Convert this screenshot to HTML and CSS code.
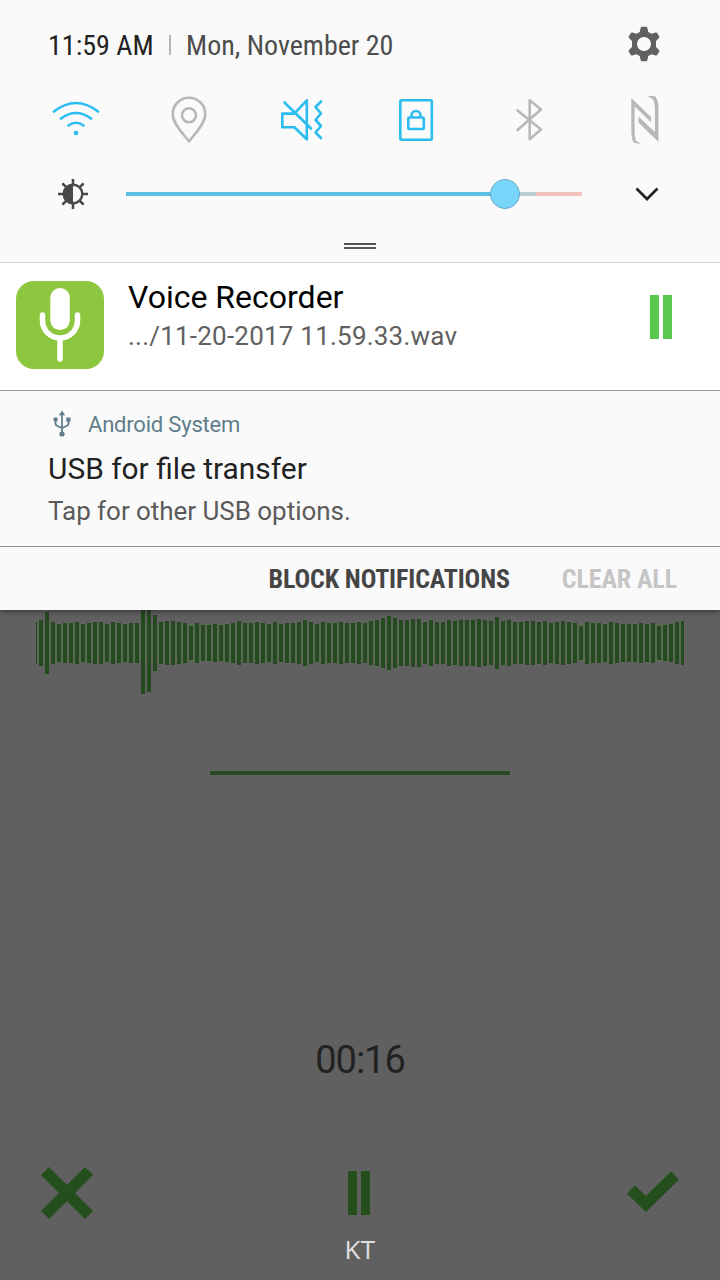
FILE: index.html
```html
<!DOCTYPE html>
<html lang="en">
<head>
<meta charset="UTF-8">
<meta name="viewport" content="width=device-width, initial-scale=1.0">
<title>Voice Recorder</title>
<link rel="stylesheet" href="styles.css">
</head>
<body>
<div id="panel">
	<div class="top">
		<span class="clock">11:59 AM</span>
		<span class="sep"></span>
		<span class="date">Mon, November 20</span>
		<svg class="gear" width="34" height="36" viewBox="0 0 34 36">
			<path fill="#606060" fill-rule="evenodd" d="M15 .8h4q1 0 1.300 1l1 4.200 3.200 1.800 4.200-1.300q1-.3 1.500.6l2 3.400q.5.900-.2 1.600l-3 2.900v6l3 2.900q.7.700.2 1.600l-2 3.400q-.5.900-1.500.6l-4.200-1.300-3.200 1.800-1 4.200q-.3 1-1.300 1h-4q-1 0-1.300-1l-1-4.200-3.200-1.800-4.200 1.300q-1 .3-1.500-.6l-2-3.400q-.5-.9.200-1.600l3-2.900v-6l-3-2.900q-.7-.7-.2-1.600l2-3.400q.5-.9 1.500-.6l4.200 1.300 3.200-1.800 1-4.200q.3-1 1.300-1zM17 11a7 7 0 1 0 0 14 7 7 0 0 0 0-14z"/>
		</svg>
	</div>

	<div class="toggles">
		<svg class="on" width="48" height="48" viewBox="52 96 48 48">
			<path d="M54 111.500q22-17 44 0M61 118.500q15-11 30 0M68.500 125.500q7.500-5.500 15 0"/>
			<circle class="dot" cx="76" cy="133" r="2.300"/>
		</svg>
		<svg width="48" height="48" viewBox="166 96 48 48">
			<path d="M189 141.500c-4-6-16.300-17-16.300-27.500a16.300 16.300 0 0 1 32.600 0c0 10.500-12.300 21.500-16.300 27.500z"/>
			<circle cx="189" cy="115.300" r="7"/>
		</svg>
		<svg class="on" width="48" height="48" viewBox="279.500 96 48 48">
			<path d="M307.300 100.300v39l-12.500-12.100h-12v-13.600h12zM285 102.500l26.500 26M321.500 101.500l-5.500 5.500 5.500 6.500-5.500 6.500 5.500 6-5.500 6.500 5.500 5.500"/>
		</svg>
		<svg class="on" width="48" height="48" viewBox="393 96 48 48">
			<rect x="400.300" y="100.200" width="31.500" height="39.500" rx="1"/>
			<rect x="408.300" y="117.500" width="15.500" height="11.500" rx="1"/>
			<path d="M411.500 117v-1.500a4.500 4.500 0 0 1 9 0v1.500"/>
		</svg>
		<svg width="48" height="48" viewBox="506.500 96 48 48">
			<path d="M518 110.500l23.500 19-11.300 9.700v-39l11.300 9.300-23.500 20.500"/>
		</svg>
		<svg width="48" height="48" viewBox="620 96 48 48">
			<path class="nfc" d="M631.300 98l19.800 19v5.200L634.600 106.500V129q0 8 1.500 12l4.900 2.500q-6 0-7.700-1.500-2-3-2-13zM658.500 142l-20-19.500v-6l16.400 15.600V110q0-9-2.700-11.300l-4.700-2.600h6q5 .4 5 13.900z"/>
		</svg>
	</div>

	<div class="brightness">
		<svg class="sun" width="32" height="32" viewBox="0 0 32 32">
			<g stroke="#484848" stroke-width="2.600"><path d="M16 1v5M16 26v5M1 16h5M26 16h5M5.400 5.400l4 4M22.600 22.600l4 4M5.400 26.600l4-4M22.600 9.400l4-4"/></g>
			<circle cx="16" cy="16" r="9.300" fill="none" stroke="#484848" stroke-width="2.400"/>
			<path d="M16 6v20a10 10 0 0 1 0-20z" fill="#484848"/>
		</svg>
		<div class="slider"><span class="fill"></span><span class="rest"></span><span class="knob"></span></div>
		<svg class="arrow" width="26" height="16" viewBox="0 0 26 16"><path d="M2.500 2.500l10.500 10.500 10.500-10.500" fill="none" stroke="#222" stroke-width="2.700"/></svg>
	</div>
	<div class="handle"></div>

	<div class="note recorder">
		<svg width="88" height="88" viewBox="0 0 88 88">
			<rect width="88" height="88" rx="18" fill="#8dc63f"/>
			<rect x="34.300" y="7" width="19.500" height="42" rx="9.700" fill="#fff"/>
			<path d="M26.500 34v5.500a17.500 17.500 0 0 0 35 0V34M44 57v21" fill="none" stroke="#fff" stroke-width="5.500" stroke-linecap="round"/>
		</svg>
		<div class="info">
			<div class="title">Voice Recorder</div>
			<div class="file">.../11-20-2017 11.59.33.wav</div>
		</div>
		<div class="pause"></div>
	</div>

	<div class="note usb">
		<div class="app">
			<svg width="18" height="28" viewBox="0 0 18 28">
				<path d="M9 3v21M2.500 9v4.500q0 2 2 2.500l4.500 2 4.500-2q2-.5 2-2.500V9" fill="none" stroke="#607d8b" stroke-width="1.800"/>
				<path d="M9 .5l3.200 4.800H5.800zM13.300 7.500h4.200v4.200h-4.200z" fill="#607d8b"/>
				<circle cx="2.600" cy="9.500" r="2.200" fill="#607d8b"/><circle cx="9" cy="24" r="2.600" fill="#607d8b"/>
			</svg>
			<span>Android System</span>
		</div>
		<div class="title">USB for file transfer</div>
		<div class="text">Tap for other USB options.</div>
	</div>

	<div class="actions">
		<span class="block">BLOCK NOTIFICATIONS</span>
		<span class="clear">CLEAR ALL</span>
	</div>
</div>

<div id="app">
	<div id="wave"></div>
	<div class="line"></div>
	<div class="time">00:16</div>
	<div class="buttons">
		<svg width="54" height="54" viewBox="0 0 54 54"><path d="M5 5l44 44M49 5L5 49" stroke="#244f1c" stroke-width="11.500"/></svg>
		<div class="pause"></div>
		<svg width="54" height="54" viewBox="0 0 54 54"><path d="M5 23.500l15 14.500L49 9.500" fill="none" stroke="#244f1c" stroke-width="11.500"/></svg>
	</div>
	<div class="carrier">KT</div>
</div>

<script>
// bar heights, px
var levels = [
	46,62,42,38,40,40,42,38,40,42,42,38,42,40,38,40,40,102,98,56,42,44,44,42,40,34,40,
	36,36,38,36,38,40,44,40,40,42,40,38,42,38,40,40,42,46,42,38,42,40,40,42,40,40,42,
	40,44,46,50,54,50,46,46,48,48,42,46,42,42,46,44,46,46,46,48,46,44,52,44,46,42,42,
	44,44,42,44,40,42,44,42,40,34,42,40,40,38,42,40,38,38,38,40,38,40,34,36,38,42,44
];
var str = '<i class="first" style="height:42px"></i>';
for (var i = 0; i < levels.length; i++) {
	str += '<i style="height:' + levels[i] + 'px"></i>';
}
document.getElementById('wave').innerHTML = str;
</script>
</body>
</html>
```
FILE: styles.css
```css
*{
	margin: 0;
	padding: 0;
	box-sizing: border-box;
}
html,body{
	width: 720px;
	height: 1280px;
	overflow: hidden;
}
body{
	font-family: Roboto, "Liberation Sans", sans-serif;
	background-color: #606060;
	display: flex;
	flex-direction: column;
}
svg{
	display: block;
	flex: none;
}
span{
	white-space: nowrap;
}

#panel{
	position: relative;
	z-index: 1;
	height: 610px;
	flex: none;
	background-color: #fafafa;
	box-shadow: 0 1px 6px rgba(0,0,0,0.5);
}

.top{
	height: 90px;
	padding: 0 59px 0 48px;
	display: flex;
	align-items: center;
	font-family: "Roboto Condensed", Roboto, sans-serif;
	font-stretch: 75%;
	font-size: 28px;
}
.clock{
	width: 106px;
	color: #222;
}
.sep{
	width: 2px;
	height: 20px;
	margin: 0 15px;
	background-color: #b5b5b5;
}
.date{
	color: #4d4d4d;
}
.gear{
	margin-left: auto;
	margin-top: -2px;
}

.toggles{
	height: 60px;
	padding: 6px 52px 0;
	display: flex;
	justify-content: space-between;
}
.toggles svg{
	fill: none;
	stroke: #b8b8b8;
	stroke-width: 2.6;
	stroke-linecap: round;
	stroke-linejoin: round;
}
.toggles .on{
	stroke: #2bbdf0;
}
.toggles .dot{
	fill: #2bbdf0;
	stroke: none;
}
.toggles .nfc{
	fill: #b8b8b8;
	stroke: none;
}

.brightness{
	height: 88px;
	padding: 0 60px 0 57px;
	display: flex;
	align-items: center;
}
.slider{
	position: relative;
	width: 456px;
	height: 4px;
	margin-left: 37px;
	display: flex;
	background-color: #f4c0bc;
}
.fill{
	width: 380px;
	background-color: #58c0e0;
}
.rest{
	width: 30px;
	background-color: #b9cfd2;
}
.knob{
	position: absolute;
	left: 364px;
	top: -13px;
	width: 30px;
	height: 30px;
	border: 1px solid #65a9c8;
	border-radius: 50%;
	background-color: #78d6fa;
}
.arrow{
	margin-left: auto;
}
.handle{
	width: 32px;
	height: 6px;
	margin: 5px auto 0;
	border-top: 2px solid #555;
	border-bottom: 2px solid #555;
}

.recorder{
	height: 128px;
	margin-top: 13px;
	padding: 18px 48px 0 16px;
	display: flex;
	background-color: #fff;
	border-top: 1px solid #d2d2d2;
}
.info{
	margin-left: 24px;
}
.recorder .title{
	font-size: 32px;
	line-height: 32px;
	color: #000;
}
.file{
	margin-top: 7px;
	font-size: 26px;
	line-height: 32px;
	letter-spacing: 0.22px;
	color: #606060;
}
.pause{
	width: 22px;
	height: 44px;
	border: solid #5ac84f;
	border-width: 0 9px;
}
.recorder .pause{
	margin: 14px 0 0 auto;
}

.usb{
	height: 156px;
	padding: 18px 48px 0;
	border-top: 1px solid #999;
}
.app{
	height: 30px;
	padding-left: 5px;
	display: flex;
	align-items: center;
	font-size: 22px;
	letter-spacing: -0.2px;
	color: #607d8b;
}
.app span{
	margin-left: 17px;
}
.usb .title{
	margin-top: 12px;
	font-size: 29.9px;
	line-height: 36px;
	color: #222;
}
.text{
	margin-top: 8px;
	font-size: 26px;
	line-height: 32px;
	letter-spacing: -0.04px;
	color: #5a5a5a;
}

.actions{
	height: 64px;
	padding-right: 43px;
	display: flex;
	align-items: center;
	justify-content: flex-end;
	border-top: 1px solid #8c8c8c;
	font-family: "Roboto Condensed", Roboto, sans-serif;
	font-stretch: 75%;
	font-size: 26px;
	font-weight: bold;
	letter-spacing: -0.13px;
	color: #454545;
}
.clear{
	margin-left: 52px;
	color: #c5c5c5;
}

#app{
	height: 670px;
	display: flex;
	flex-direction: column;
	align-items: center;
}
#wave{
	width: 648px;
	height: 66px;
	flex: none;
	display: flex;
	align-items: center;
	gap: 2px;
	overflow: visible;
	background: linear-gradient(#5a6953, #5a6953) 0 14px / 100% 38px no-repeat;
}
#wave i{
	width: 4px;
	flex: none;
	background-color: #264a20;
}
#wave .first{
	width: 1px;
}
#wave i:last-child{
	width: 3px;
}
.line{
	width: 300px;
	height: 4px;
	flex: none;
	margin-top: 95px;
	background-color: #254c1f;
}
.time{
	margin-top: 261px;
	font-family: Roboto, sans-serif;
	font-size: 38px;
	font-weight: 450;
	line-height: 48px;
	letter-spacing: -1px;
	color: #222;
}
.buttons{
	width: 640px;
	height: 54px;
	margin-top: 82px;
	display: flex;
	justify-content: space-between;
	align-items: center;
}
.buttons .pause{
	margin-right: 2px;
	border-color: #244f1c;
}
.carrier{
	margin-top: 13px;
	font-family: "Open Sans", sans-serif;
	font-size: 26px;
	line-height: 32px;
	letter-spacing: 0.5px;
	color: #e0e0e0;
}
```
